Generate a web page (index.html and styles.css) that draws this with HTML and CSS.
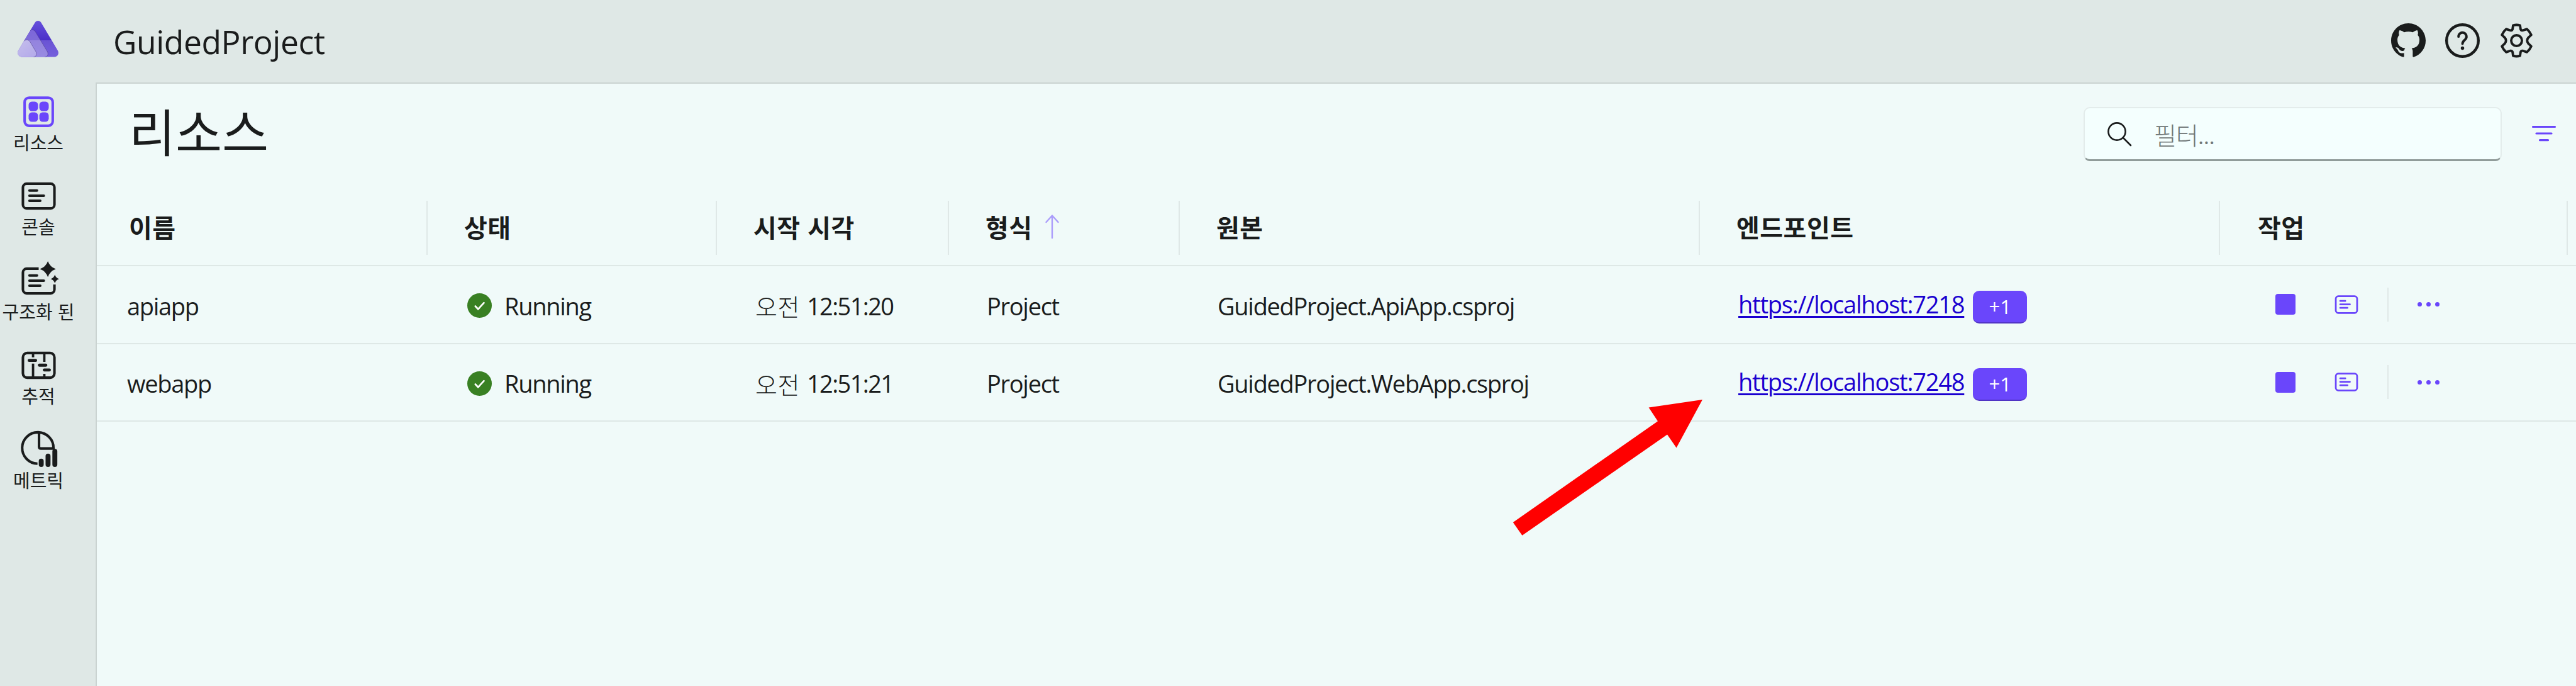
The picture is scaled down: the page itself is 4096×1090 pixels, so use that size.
FILE: index.html
```html
<!DOCTYPE html>
<html lang="ko">
<head>
<meta charset="utf-8">
<title>GuidedProject</title>
<link rel="stylesheet" href="styles.css">
</head>
<body>
<svg class="defs" aria-hidden="true">
  <symbol id="console" viewBox="0 0 24 24"><rect x="2.75" y="4.75" width="18.5" height="14.5" rx="2.2" fill="none" stroke="currentColor" stroke-width="1.5"/><path d="M6.6 8.8h4.4M6.6 11.8h8.4M6.6 14.8h6.3" stroke="currentColor" stroke-width="1.5" stroke-linecap="round"/></symbol>
</svg>
<div class="app">
  <header class="topbar">
    <svg class="logo" viewBox="0 0 66 58">
      <defs>
        <linearGradient id="g1" x1="0" y1="0" x2="0" y2="1"><stop offset="0" stop-color="#6550dc"/><stop offset="0.54" stop-color="#4b2fc8"/><stop offset="0.54" stop-color="#6a54d4"/><stop offset="1" stop-color="#755fdc"/></linearGradient>
        <linearGradient id="g2" x1="0" y1="0" x2="0" y2="1"><stop offset="0" stop-color="#7c67da"/><stop offset="0.39" stop-color="#7f6cd8"/><stop offset="0.39" stop-color="#9484de"/><stop offset="1" stop-color="#988ae2"/></linearGradient>
        <linearGradient id="g3" x1="0" y1="0" x2="1" y2="1"><stop offset="0" stop-color="#c5beec"/><stop offset="1" stop-color="#b3a9ea"/></linearGradient>
      </defs>
      <path d="M27.700 2.800C30-.9 35-.9 37.300 2.800L64 47.500C66.500 52 63.500 57.500 58.500 57.500H7C2 57.500-1.500 52 1 47.500Z" fill="url(#g1)"/>
      <path d="M20.300 15.500C22.500 13.500 26.500 14.500 28 17L47.300 49C49.500 53 47.500 57.500 43.500 57.500H7C2 57.500-1.500 52 1 47.500Z" fill="url(#g2)"/>
      <path d="M10.500 32C13 29.500 17.500 30 19.500 33L29.300 49.500C31 53 29.500 57.500 25.500 57.500H7C2 57.500-1.500 52 1 47.500Z" fill="url(#g3)"/>
      <path d="M20.300 15.500C22.500 13.500 26.500 14.500 28 17L47.300 49C49.500 53 47.500 57.500 43.500 57.500M10.500 32C13 29.500 17.500 30 19.500 33L29.300 49.500C31 53 29.500 57.500 25.500 57.500" fill="none" stroke="#453a80" stroke-opacity=".5" stroke-width="1"/>
    </svg>
    <div class="app-name">GuidedProject</div>
    <div class="tools">
      <svg viewBox="0 0 16 16"><path fill="currentColor" d="M8 0C3.580 0 0 3.580 0 8c0 3.540 2.290 6.530 5.470 7.590.4.070.55-.17.55-.38 0-.19-.01-.82-.01-1.490-2.010.37-2.530-.49-2.690-.94-.09-.23-.48-.94-.82-1.130-.28-.15-.68-.52-.01-.53.63-.01 1.080.58 1.230.82.72 1.210 1.870.87 2.330.66.07-.52.28-.87.51-1.070-1.780-.2-3.640-.89-3.640-3.950 0-.87.31-1.590.82-2.150-.08-.2-.36-1.020.08-2.120 0 0 .67-.21 2.200.82.64-.18 1.320-.27 2-.27s1.360.09 2 .27c1.530-1.040 2.200-.82 2.200-.82.44 1.100.16 1.920.08 2.120.51.56.82 1.270.82 2.150 0 3.070-1.870 3.750-3.650 3.950.29.25.54.73.54 1.480 0 1.070-.01 1.930-.01 2.200 0 .21.15.46.55.38A8.010 8.010 0 0 0 16 8c0-4.420-3.580-8-8-8z"/></svg>
      <svg viewBox="0 0 20 20"><circle cx="10" cy="10" r="9.200" fill="none" stroke="currentColor" stroke-width="1.600"/><path d="M7.700 7.700a2.300 2.300 0 1 1 3.900 1.650c-.9.85-1.600 1.250-1.600 2.450" fill="none" stroke="currentColor" stroke-width="1.400" stroke-linecap="round"/><circle cx="10" cy="14.400" r="1" fill="currentColor"/></svg>
      <svg viewBox="0 0 20 20"><path d="M8 1.200Q10 .6 12 1.200L12.300 3.300Q12.600 4.300 13.700 4.100L16 3.300Q17.600 4.700 18.500 6.700L16.800 8.300Q15.400 10 16.800 11.700L18.500 13.300Q17.600 15.300 16 16.700L13.700 15.900Q12.600 15.700 12.300 16.700L12 18.800Q10 19.400 8 18.800L7.700 16.700Q7.400 15.700 6.300 15.900L4 16.700Q2.400 15.300 1.500 13.300L3.200 11.700Q4.600 10 3.200 8.300L1.500 6.700Q2.400 4.700 4 3.300L6.300 4.100Q7.400 4.300 7.700 3.300Z" fill="none" stroke="currentColor" stroke-width="1.400" stroke-linejoin="round"/><circle cx="10" cy="10" r="3.100" fill="none" stroke="currentColor" stroke-width="1.400"/></svg>
    </div>
  </header>
  <nav class="sidebar">
    <a class="nav-item active"><svg viewBox="0 0 24 24"><rect x="3.750" y="3.750" width="16.500" height="16.500" rx="2.600" fill="none" stroke="currentColor" stroke-width="1.500"/><rect x="6.100" y="6.100" width="5.500" height="5.500" rx="1.900" fill="currentColor"/><rect x="12.400" y="6.100" width="5.500" height="5.500" rx="1.900" fill="currentColor"/><rect x="6.100" y="12.400" width="5.500" height="5.500" rx="1.900" fill="currentColor"/><rect x="12.400" y="12.400" width="5.500" height="5.500" rx="1.900" fill="currentColor"/></svg><span>리소스</span></a>
    <a class="nav-item"><svg><use href="#console"/></svg><span>콘솔</span></a>
    <a class="nav-item"><svg viewBox="0 0 24 24"><path d="M12 4.750H5A2.250 2.250 0 0 0 2.750 7V17A2.250 2.250 0 0 0 5 19.250H19A2.250 2.250 0 0 0 21.250 17V14" fill="none" stroke="currentColor" stroke-width="1.500"/><path d="M6.600 8.800h4.400M6.600 11.800h8.400M6.600 14.800h6.300" stroke="currentColor" stroke-width="1.500" stroke-linecap="round"/><path d="M17.400 .4Q18.600 3.800 22.100 5Q18.600 6.200 17.400 9.700Q16.200 6.200 12.700 5Q16.200 3.800 17.400 .4ZM21.500 8.300Q22.100 10.200 24 10.800Q22.100 11.400 21.500 13.300Q20.900 11.400 19 10.800Q20.900 10.200 21.500 8.300Z" fill="currentColor"/></svg><span>구조화 된</span></a>
    <a class="nav-item"><svg viewBox="0 0 24 24"><rect x="2.750" y="4.750" width="18.500" height="14.500" rx="2.500" fill="none" stroke="currentColor" stroke-width="1.500"/><path d="M8.700 5v2.300M8.700 11v8M15.300 5v5M15.300 17v2" stroke="currentColor" stroke-width="1.400"/><path d="M6.400 9.100h3.800M12.400 11.900h3.800M15.300 14.700h3" stroke="currentColor" stroke-width="1.800" stroke-linecap="round"/></svg><span>추적</span></a>
    <a class="nav-item"><svg viewBox="0 0 24 24"><path d="M11.300 20.200A9.200 9.200 0 1 1 20.700 11.300H13.300Q12.200 11.300 12.200 10.200V2.500" fill="none" stroke="currentColor" stroke-width="1.500"/><path d="M13.500 18.700v2M17.500 15.800v4.900M21.500 13v7.700" stroke="currentColor" stroke-width="2.900" stroke-linecap="round"/></svg><span>메트릭</span></a>
  </nav>
  <main class="page">
    <div class="page-head">
      <h1>리소스</h1>
      <div class="search">
        <svg viewBox="0 0 38 38"><circle cx="15" cy="15" r="13.600" fill="none" stroke="currentColor" stroke-width="2.600"/><path d="M25 25L37 37" stroke="currentColor" stroke-width="2.600" stroke-linecap="round"/></svg>
        <span>필터...</span>
      </div>
      <svg class="filter" viewBox="0 0 38 26"><path d="M1.500 2.500h35M7 13h24M12.500 23.700h13" stroke="currentColor" stroke-width="3.200" stroke-linecap="round"/></svg>
    </div>
    <div class="grid head">
      <div>이름</div><div>상태</div><div>시작 시각</div>
      <div>형식<svg class="sort" viewBox="0 0 22 38"><path d="M11 37V2M1.500 12L11 1.500L20.500 12" fill="none" stroke="currentColor" stroke-width="2.400" stroke-linecap="round" stroke-linejoin="round"/></svg></div>
      <div>원본</div><div>엔드포인트</div><div>작업</div>
    </div>
    <div class="grid row">
      <div>apiapp</div>
      <div><svg class="ok" viewBox="0 0 38 38"><circle cx="19" cy="19" r="19" fill="#398023"/><path d="M12.500 20l4.300 4.600 9-9.800" fill="none" stroke="#fff" stroke-width="2.600" stroke-linecap="round" stroke-linejoin="round"/></svg>Running</div>
      <div class="time"><span>오전</span> 12:51:20</div><div>Project</div><div>GuidedProject.ApiApp.csproj</div>
      <div><a class="link">https://localhost:7218</a><span class="badge">+1</span></div>
      <div class="actions"><i class="stop"></i><svg class="logs"><use href="#console"/></svg><i class="sep"></i><i class="more"><b></b><b></b><b></b></i></div>
    </div>
    <div class="grid row">
      <div>webapp</div>
      <div><svg class="ok" viewBox="0 0 38 38"><circle cx="19" cy="19" r="19" fill="#398023"/><path d="M12.500 20l4.300 4.600 9-9.800" fill="none" stroke="#fff" stroke-width="2.600" stroke-linecap="round" stroke-linejoin="round"/></svg>Running</div>
      <div class="time"><span>오전</span> 12:51:21</div><div>Project</div><div>GuidedProject.WebApp.csproj</div>
      <div><a class="link">https://localhost:7248</a><span class="badge">+1</span></div>
      <div class="actions"><i class="stop"></i><svg class="logs"><use href="#console"/></svg><i class="sep"></i><i class="more"><b></b><b></b><b></b></i></div>
    </div>
  </main>
</div>
<svg class="pointer" viewBox="0 0 302 216"><path d="M302 0L216.600 12.600L231 34.200L.8 194.900L15.400 215.800L246 55.500L260.600 76.500Z" fill="#f00"/></svg>
</body>
</html>
```
FILE: styles.css
```css
* { box-sizing: border-box; }
body {
  margin: 0;
  overflow: hidden;
  background: #f0faf9;
  color: #1a1c1c;
  font-family: "Open Sans", "Noto Sans CJK KR", sans-serif;
  font-size: 38px;
}
.defs { display: none; }
svg { flex: none; overflow: visible; }
.app {
  display: grid;
  grid-template: 131px 959px / 152px 3944px;
}
.topbar {
  grid-column: 1 / 3;
  display: flex;
  background: #dfe8e6;
}
.logo { width: 66px; height: 58px; margin: 33px 0 0 28px; }
.app-name {
  margin: 23px 0 0 86px;
  font-size: 51.500px;
  line-height: 86px;
  letter-spacing: -.4px;
}
.tools { display: flex; gap: 31px; margin: 37px 67px 0 auto; }
.tools svg { width: 55px; height: 55px; }

.sidebar {
  background: #dfe8e6;
  padding-top: 14px;
}
.nav-item {
  display: flex;
  flex-direction: column;
  align-items: center;
  width: 122px;
  height: 134.350px;
  white-space: nowrap;
  font: 29px/31px "Noto Sans CJK KR", sans-serif;
}
.nav-item svg { width: 65px; height: 65px; }
.nav-item.active svg { color: #6a46fb; }

.page {
  border-top: 2px solid #cad3d1;
  border-left: 2px solid #cad3d1;
}
.page-head { display: flex; align-items: flex-start; height: 177px; }
h1 {
  margin: 18px 0 0 51px;
  font: 400 80.500px/110px "Noto Sans CJK KR", sans-serif;
}
.search {
  display: flex;
  align-items: center;
  width: 665px;
  height: 86px;
  margin: 37px 0 0 auto;
  padding-left: 36px;
  background: #f4fffe;
  border: 2px solid #e3eceb;
  border-bottom: 3px solid #909b99;
  border-radius: 10px;
}
.search svg { width: 38px; height: 38px; }
.search span {
  margin-left: 36px;
  color: #707777;
  font: 300 39px/50px "Noto Sans CJK KR", sans-serif;
  letter-spacing: -1px;
}
.filter {
  width: 38px;
  height: 26px;
  margin: 66px 32px 0 48px;
  color: #6a46fb;
}
.grid {
  display: grid;
  grid-template-columns: 526px 460px 369px 367px 827px 827px 553px;
  border-bottom: 2px solid #dee8e6;
}
.grid > div { display: flex; align-items: center; white-space: nowrap; }
.head {
  height: 113px;
  padding-top: 9px;
  font: 700 40px/50px "Noto Sans CJK KR", sans-serif;
  letter-spacing: .5px;
}
.head > div {
  height: 86px;
  padding: 0 0 4px 58px;
  border-right: 2px solid #dfe8e7;
}
.head > div:first-child { padding-left: 51px; }
.head > div:last-child { padding-left: 60px; }
.sort { width: 22px; height: 38px; margin-left: 20px; color: #ab9cfb; }
.row { height: 123.500px; letter-spacing: -1.300px; }
.row > div { padding: 4px 0 0 60px; }
.row > div:first-child { padding-left: 48px; }
.ok { width: 39px; height: 39px; margin: 0 20px 0 3px; }
.row > .time { padding-left: 61px; letter-spacing: -1.600px; }
.time span { margin-right: 11px; letter-spacing: .5px; font-weight: 300; }
.link {
  margin: -6px 0 0 1px;
  letter-spacing: -1.200px;
  color: #1a00d0;
  text-decoration: underline;
  text-decoration-thickness: 3px;
  text-underline-offset: 4px;
}
.badge {
  width: 86px;
  height: 52px;
  margin: 4px 0 0 14px;
  letter-spacing: 0;
  border-radius: 10px;
  border-bottom: 2px solid #5034c4;
  background: #6a46fb;
  color: #fff;
  font-size: 31px;
  line-height: 51px;
  text-align: center;
}
.row > .actions { padding: 0 0 0 88px; color: #6a46fb; }
.stop { width: 32px; height: 33px; border-radius: 4px; background: #6a46fb; }
.logs { width: 44px; height: 44px; margin-left: 59px; }
.sep { width: 2px; height: 54px; margin-left: 43px; background: #e0e9e8; }
.more { display: flex; gap: 7px; margin-left: 46px; }
.more b { width: 7px; height: 7px; border-radius: 50%; background: #6a46fb; }
.pointer {
  position: absolute;
  left: 2405px;
  top: 635px;
  width: 302px;
  height: 216px;
}
```
